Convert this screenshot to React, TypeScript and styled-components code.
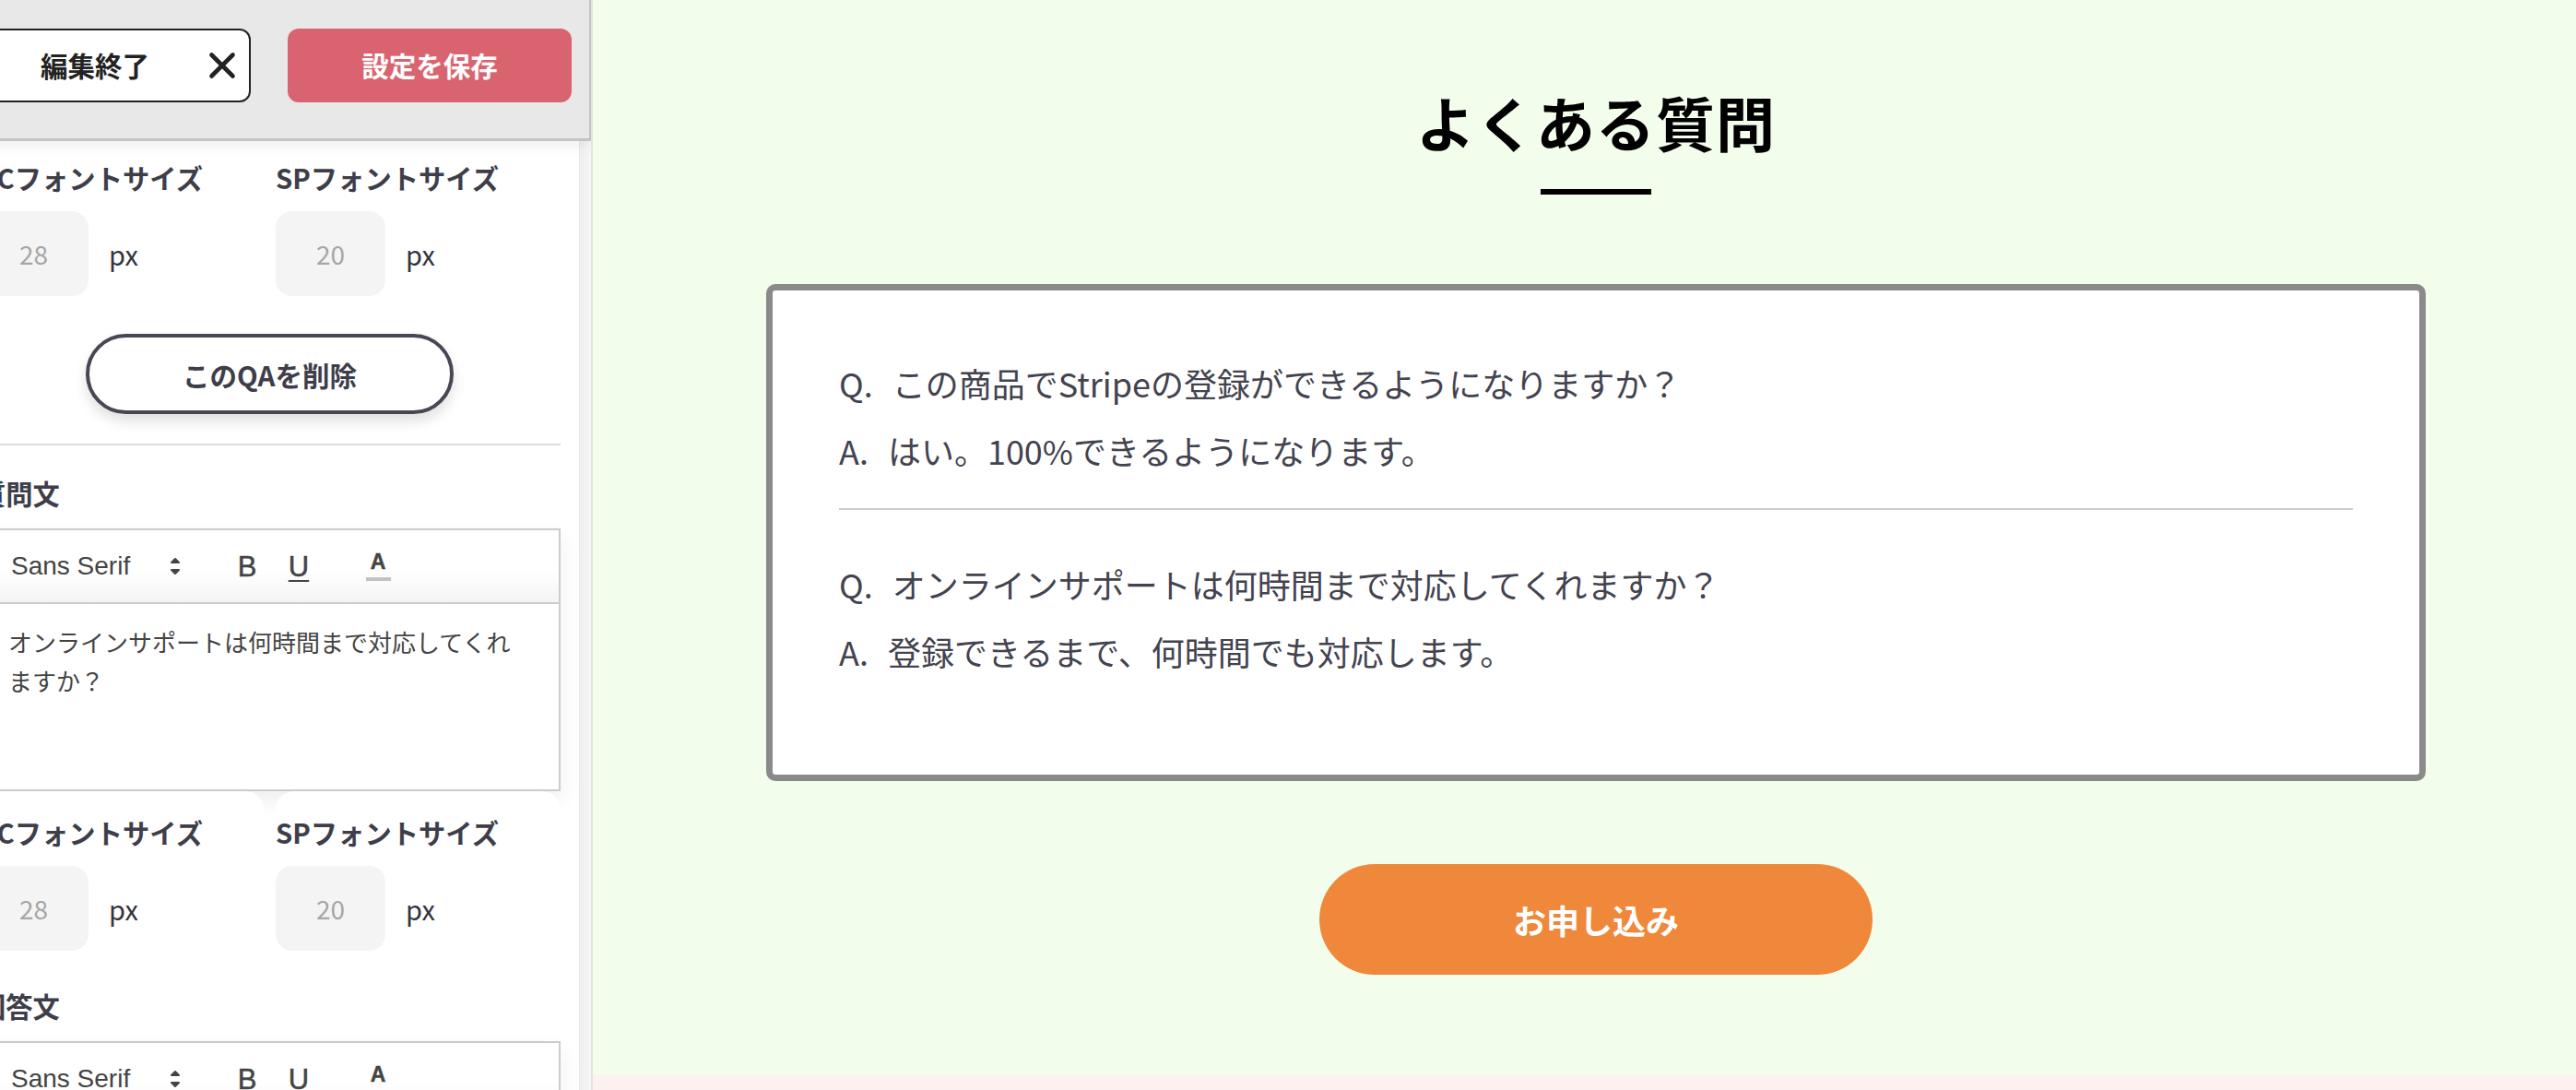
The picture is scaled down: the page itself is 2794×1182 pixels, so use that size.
import React from "react";
import styled, { createGlobalStyle } from "styled-components";
import { X } from "lucide-react";

const GlobalStyle = createGlobalStyle`
  * { box-sizing: border-box; }
  html, body {
    margin: 0;
    padding: 0;
    height: 100%;
    overflow: hidden;
  }
  body {
    font-family: "Noto Sans CJK JP", "Noto Sans", sans-serif;
    color: #333;
  }
  #root { height: 100%; }
  button { font-family: inherit; cursor: pointer; }
`;

const Layout = styled.div`
  display: flex;
  height: 100vh;
  overflow: hidden;
`;

/* ---------- editor side panel ---------- */

const Panel = styled.aside`
  flex: 0 0 700px;
  margin-left: -57px;
  display: flex;
  flex-direction: column;
  background: #fff;
  border-right: 2px solid #e4e4e4;
  overflow: hidden;
`;

const PanelHeader = styled.header`
  position: relative;
  z-index: 2;
  flex: 0 0 153px;
  display: flex;
  align-items: flex-start;
  gap: 40px;
  padding: 31px 19px 0 21px;
  background: #e8e8e8;
  border-right: 2px solid #c4c4c4;
  border-bottom: 3px solid #c4c4c4;
  box-shadow: 0 6px 14px rgba(0, 0, 0, 0.06);
`;

const HeaderButton = styled.button<{ $primary?: boolean }>`
  flex: none;
  width: 308px;
  height: 80px;
  display: flex;
  align-items: center;
  justify-content: ${(p) => (p.$primary ? "center" : "space-between")};
  padding: ${(p) => (p.$primary ? "0" : "0 6px 0 78px")};
  border-radius: 12px;
  border: ${(p) => (p.$primary ? "none" : "2px solid #222")};
  background: ${(p) => (p.$primary ? "#d96470" : "#fff")};
  color: ${(p) => (p.$primary ? "#fff" : "#222")};
  font-size: 29.5px;
  font-weight: 700;
  line-height: 1;
`;

const PanelBody = styled.div`
  flex: 1;
  display: flex;
  min-height: 0;
`;

const PanelScroll = styled.div`
  flex: 1;
  min-width: 0;
  margin-top: -5px;
  padding: 0 20px 0 34px;
`;

const ScrollTrack = styled.div`
  flex: 0 0 13px;
  background: linear-gradient(to right, #efefef, #f7f7f7);
  border-left: 1px solid #e9e9e9;
`;

const FontGrid = styled.div`
  display: grid;
  grid-template-columns: 1fr 1fr;
  gap: 13px;
`;

const FontCard = styled.div`
  position: relative;
  background: #fff;
  border-radius: 20px;
  padding: 24px 0 16px;
`;

const FieldLabel = styled.div<{ $top?: number }>`
  margin-top: ${(p) => p.$top ?? 0}px;
  font-size: 29.3px;
  font-weight: 700;
  line-height: 40px;
  color: #3e3e4a;
  white-space: nowrap;
`;

const SizeRow = styled.div`
  display: flex;
  align-items: center;
  gap: 22px;
  margin-top: 17px;
`;

const SizeBox = styled.div`
  width: 119px;
  height: 92px;
  border-radius: 18px;
  background: #f4f4f4;
  display: flex;
  align-items: center;
  justify-content: center;
  font-size: 28px;
  color: #a6a6a6;
`;

const Unit = styled.span`
  font-size: 29px;
  color: #33333d;
`;

const DeleteButton = styled.button`
  display: block;
  margin: 25px auto 0;
  width: 399px;
  height: 87px;
  border: 4px solid #474755;
  border-radius: 44px;
  background: #fff;
  color: #3e3e4a;
  font-size: 29.5px;
  font-weight: 700;
  box-shadow: 0 8px 14px rgba(0, 0, 0, 0.12);
`;

const Divider = styled.hr`
  margin: 32px 0 0;
  border: none;
  height: 2px;
  background: #dadada;
`;

const EditorBox = styled.div`
  position: relative;
  margin-top: 19px;
  border: 2px solid #cccccc;
  background: #fff;
  box-shadow: 0 10px 22px rgba(0, 0, 0, 0.07);
`;

const Toolbar = styled.div`
  height: 80px;
  display: flex;
  align-items: center;
  padding-left: 16px;
  border-bottom: 2px solid #cccccc;
  background: linear-gradient(to bottom, #fff 55%, #f4f4f4);
`;

const FontPicker = styled.div`
  width: 213px;
  display: flex;
  align-items: center;
  justify-content: space-between;
  padding-left: 17px;
  font-family: "Liberation Sans", Arial, sans-serif;
  font-size: 28px;
  color: #444;
`;

const ToolGroup = styled.div<{ $gap: number }>`
  display: flex;
  margin-left: ${(p) => p.$gap}px;
`;

const ToolButton = styled.span<{ $underline?: boolean }>`
  width: 56px;
  height: 48px;
  display: flex;
  flex-direction: column;
  align-items: center;
  justify-content: center;
  font-family: "Liberation Sans", Arial, sans-serif;
  font-size: 31px;
  line-height: 1;
  color: #444;
  -webkit-text-stroke: 0.5px #444;
  text-decoration: ${(p) => (p.$underline ? "underline" : "none")};
  text-decoration-thickness: 2px;
  text-underline-offset: 4px;
`;

const ColorLetter = styled.span`
  font-family: "Liberation Sans", Arial, sans-serif;
  font-size: 23px;
  font-weight: 700;
  line-height: 1;
  color: #444;
`;

const ColorBar = styled.span`
  width: 27px;
  height: 4px;
  margin-top: 5px;
  background: #c2c2c2;
`;

const EditorContent = styled.div`
  height: 201px;
  padding: 22px 30px;
  font-family: "Liberation Sans", "Noto Sans CJK JP", sans-serif;
  font-size: 26px;
  line-height: 42px;
  color: #444;
`;

/* ---------- page preview ---------- */

const Main = styled.main`
  flex: 1;
  min-width: 0;
  display: flex;
  flex-direction: column;
  background: #fcf0f0;
`;

const FaqSection = styled.section`
  display: flex;
  flex-direction: column;
  align-items: center;
  padding: 93px 0 109px 25px;
  background: #f2fdec;
`;

const Title = styled.h2`
  margin: 0;
  font-size: 64px;
  font-weight: 700;
  line-height: 1.2;
  letter-spacing: 1px;
  color: #000;
`;

const TitleBar = styled.div`
  width: 120px;
  height: 6px;
  margin-top: 35px;
  background: #000;
`;

const QaCard = styled.div`
  width: 100%;
  max-width: 1800px;
  margin-top: 97px;
  padding: 72px 72px 106px;
  border: 7px solid #8a8a8a;
  border-radius: 10px;
  background: #fff;
`;

const QaItem = styled.div`
  padding: 52px 0 35px;
  border-bottom: 2px solid #cccccc;

  &:first-child { padding-top: 0; }
  &:last-child {
    padding-bottom: 0;
    border-bottom: none;
  }
`;

const QaLine = styled.p`
  margin: 0;
  font-size: 36px;
  line-height: 56px;
  color: #43434f;

  & + & { margin-top: 17px; }
`;

const QaMark = styled.span`
  display: inline-block;
  margin-right: 21px;
`;

const ApplyButton = styled.button`
  margin-top: 90px;
  width: 600px;
  height: 120px;
  border: none;
  border-radius: 60px;
  background: #ef883b;
  color: #fff;
  font-size: 36px;
  font-weight: 700;
`;

const NextSection = styled.div`
  flex: 1;
  background: #fcf0f0;
`;

const faqs = [
  {
    q: "この商品でStripeの登録ができるようになりますか？",
    a: "はい。100%できるようになります。",
  },
  {
    q: "オンラインサポートは何時間まで対応してくれますか？",
    a: "登録できるまで、何時間でも対応します。",
  },
];

function PickerArrows() {
  return (
    <svg width="36" height="36" viewBox="0 0 18 18">
      <polygon points="7 11 9 13 11 11 7 11" fill="#444" stroke="#444" strokeWidth="1" strokeLinejoin="round" />
      <polygon points="7 7 9 5 11 7 7 7" fill="#444" stroke="#444" strokeWidth="1" strokeLinejoin="round" />
    </svg>
  );
}

function FontSizes() {
  return (
    <FontGrid>
      <FontCard>
        <FieldLabel>PCフォントサイズ</FieldLabel>
        <SizeRow>
          <SizeBox>28</SizeBox>
          <Unit>px</Unit>
        </SizeRow>
      </FontCard>
      <FontCard>
        <FieldLabel>SPフォントサイズ</FieldLabel>
        <SizeRow>
          <SizeBox>20</SizeBox>
          <Unit>px</Unit>
        </SizeRow>
      </FontCard>
    </FontGrid>
  );
}

function RichEditor({ children }: { children?: React.ReactNode }) {
  return (
    <EditorBox>
      <Toolbar>
        <FontPicker>
          <span>Sans Serif</span>
          <PickerArrows />
        </FontPicker>
        <ToolGroup $gap={32}>
          <ToolButton>B</ToolButton>
          <ToolButton $underline>U</ToolButton>
        </ToolGroup>
        <ToolGroup $gap={30}>
          <ToolButton>
            <ColorLetter>A</ColorLetter>
            <ColorBar />
          </ToolButton>
        </ToolGroup>
      </Toolbar>
      <EditorContent>{children}</EditorContent>
    </EditorBox>
  );
}

export default function App() {
  return (
    <>
      <GlobalStyle />
      <Layout>
        <Panel>
          <PanelHeader>
            <HeaderButton>
              <span>編集終了</span>
              <X size={46} strokeWidth={2.4} color="#222" />
            </HeaderButton>
            <HeaderButton $primary>設定を保存</HeaderButton>
          </PanelHeader>
          <PanelBody>
            <PanelScroll>
              <FontSizes />
              <DeleteButton>このQAを削除</DeleteButton>
              <Divider />
              <FieldLabel $top={31}>質問文</FieldLabel>
              <RichEditor>
                オンラインサポートは何時間まで対応してくれ
                <br />
                ますか？
              </RichEditor>
              <FontSizes />
              <FieldLabel $top={23}>回答文</FieldLabel>
              <RichEditor />
            </PanelScroll>
            <ScrollTrack />
          </PanelBody>
        </Panel>

        <Main>
          <FaqSection>
            <Title>よくある質問</Title>
            <TitleBar />
            <QaCard>
              {faqs.map((item) => (
                <QaItem key={item.q}>
                  <QaLine>
                    <QaMark>Q.</QaMark>
                    {item.q}
                  </QaLine>
                  <QaLine>
                    <QaMark>A.</QaMark>
                    {item.a}
                  </QaLine>
                </QaItem>
              ))}
            </QaCard>
            <ApplyButton>お申し込み</ApplyButton>
          </FaqSection>
          <NextSection />
        </Main>
      </Layout>
    </>
  );
}
